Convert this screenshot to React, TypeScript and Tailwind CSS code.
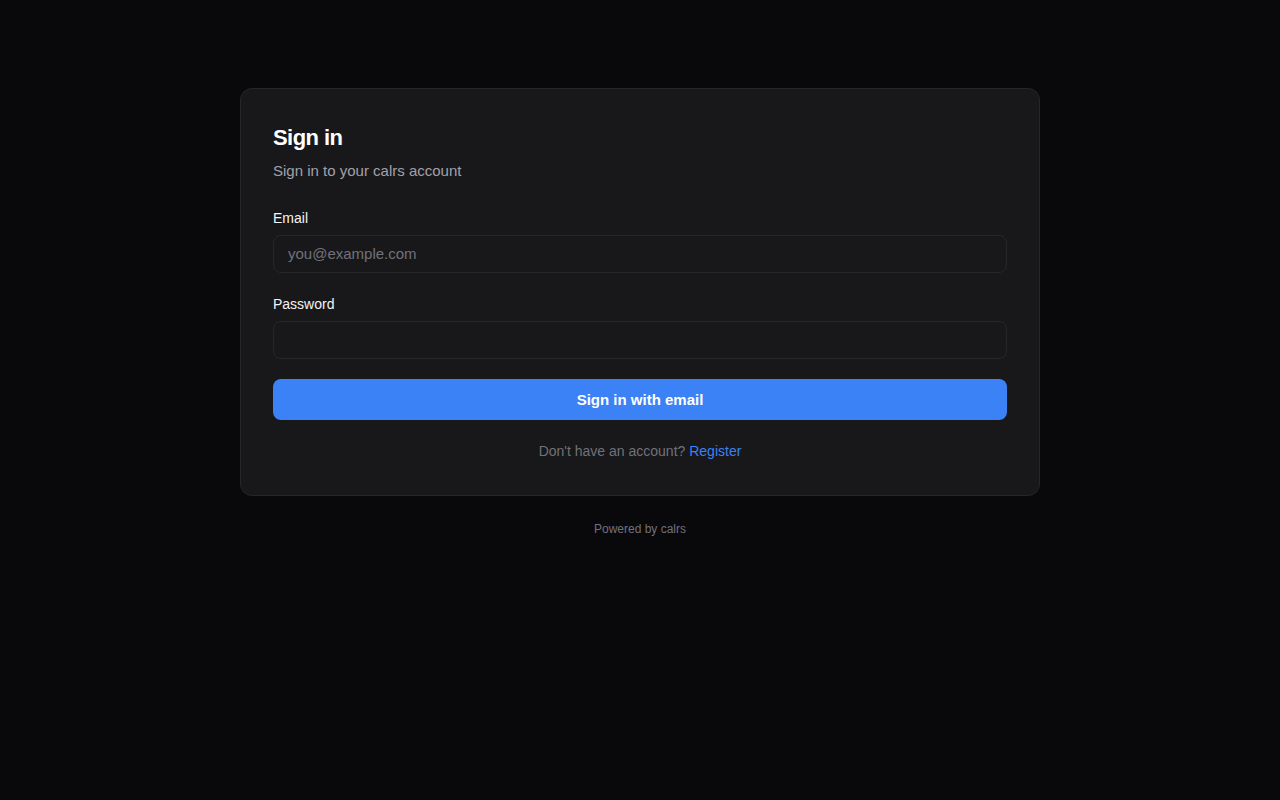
export default function App() {
  return (
    <div className="min-h-screen bg-[#09090b] font-['Liberation_Sans',Arial,sans-serif] text-white">
      <div className="mx-auto flex w-[800px] flex-col items-center pt-[88px]">
        <div className="w-full rounded-xl border border-[#27272a] bg-[#18181b] px-8 pb-[34px] pt-[33px]">
          <h1 className="text-[22px] font-bold leading-8 tracking-tight text-white">Sign in</h1>
          <p className="mt-1.5 text-[15px] leading-[22px] text-[#a1a1aa]">
            Sign in to your calrs account
          </p>

          <form className="mt-[26px] flex flex-col" onSubmit={(e) => e.preventDefault()}>
            <label className="text-sm leading-5 text-[#f4f4f5]" htmlFor="email">
              Email
            </label>
            <input
              id="email"
              type="email"
              placeholder="you@example.com"
              className="mt-[7px] h-[38px] rounded-lg border border-[#27272a] bg-[#18181b] px-[14px] pb-px text-[15px] text-white outline-none placeholder:text-[#71717a]"
            />

            <label className="mt-[21px] text-sm leading-5 text-[#f4f4f5]" htmlFor="password">
              Password
            </label>
            <input
              id="password"
              type="password"
              className="mt-[7px] h-[38px] rounded-lg border border-[#27272a] bg-[#18181b] px-[14px] text-[15px] text-white outline-none"
            />

            <button
              type="submit"
              className="mt-5 h-[41px] rounded-lg bg-[#3b82f6] pt-px text-[15px] font-bold text-white"
            >
              Sign in with email
            </button>
          </form>

          <p className="mt-[21px] text-center text-sm leading-5 text-[#71717a]">
            Don't have an account? <a className="text-[#3b82f6]">Register</a>
          </p>
        </div>

        <p className="mt-[25px] text-xs leading-4 text-[#71717a]">Powered by calrs</p>
      </div>
    </div>
  );
}
